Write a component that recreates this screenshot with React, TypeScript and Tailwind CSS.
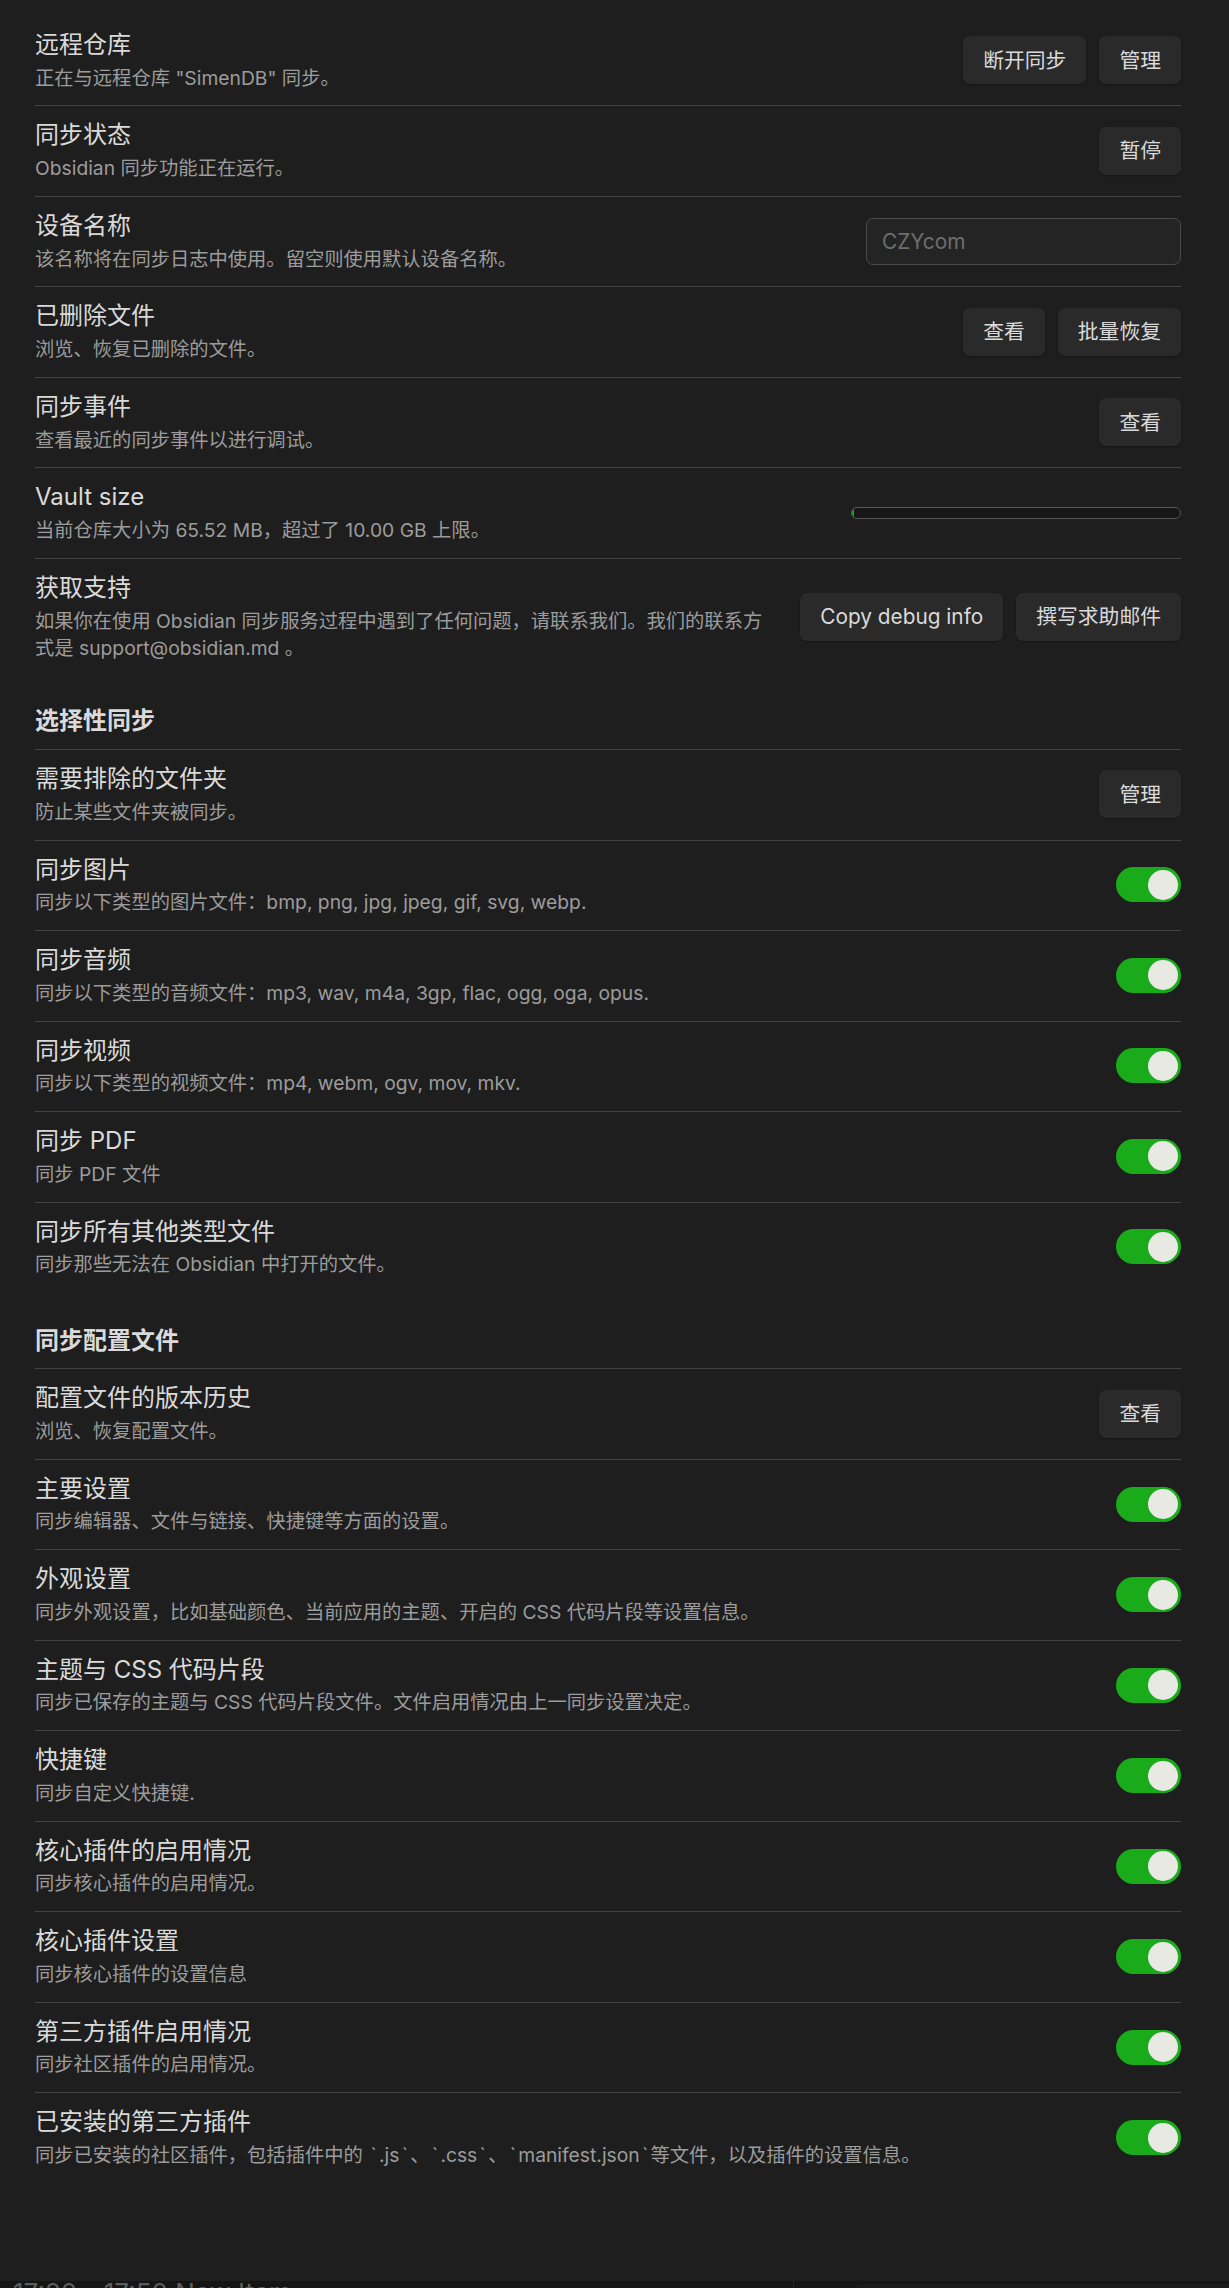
import React from 'react';
import clsx from 'clsx';

type Control =
  | { kind: 'buttons'; labels: string[] }
  | { kind: 'toggle' }
  | { kind: 'input'; placeholder: string }
  | { kind: 'progress'; percent: number };

interface Item {
  name: string;
  desc: React.ReactNode;
  control: Control;
}

interface Section {
  heading?: string;
  headingPad?: string;
  items: Item[];
}

// backtick in the reference font is noticeably wider
const Tick = () => <span className="px-[2.3px]">`</span>;

const sections: Section[] = [
  {
    items: [
      {
        name: '远程仓库',
        desc: '正在与远程仓库 "SimenDB" 同步。',
        control: { kind: 'buttons', labels: ['断开同步', '管理'] },
      },
      {
        name: '同步状态',
        desc: 'Obsidian 同步功能正在运行。',
        control: { kind: 'buttons', labels: ['暂停'] },
      },
      {
        name: '设备名称',
        desc: '该名称将在同步日志中使用。留空则使用默认设备名称。',
        control: { kind: 'input', placeholder: 'CZYcom' },
      },
      {
        name: '已删除文件',
        desc: '浏览、恢复已删除的文件。',
        control: { kind: 'buttons', labels: ['查看', '批量恢复'] },
      },
      {
        name: '同步事件',
        desc: '查看最近的同步事件以进行调试。',
        control: { kind: 'buttons', labels: ['查看'] },
      },
      {
        name: 'Vault size',
        desc: '当前仓库大小为 65.52 MB，超过了 10.00 GB 上限。',
        control: { kind: 'progress', percent: 0.7 },
      },
      {
        name: '获取支持',
        desc: (
          <>
            如果你在使用 Obsidian 同步服务过程中遇到了任何问题，请联系我们。我们的联系方
            <br />
            式是 support@obsidian.md 。
          </>
        ),
        control: { kind: 'buttons', labels: ['Copy debug info', '撰写求助邮件'] },
      },
    ],
  },
  {
    heading: '选择性同步',
    headingPad: 'pt-[30px] pb-[12.5px]',
    items: [
      {
        name: '需要排除的文件夹',
        desc: '防止某些文件夹被同步。',
        control: { kind: 'buttons', labels: ['管理'] },
      },
      {
        name: '同步图片',
        desc: '同步以下类型的图片文件：bmp, png, jpg, jpeg, gif, svg, webp.',
        control: { kind: 'toggle' },
      },
      {
        name: '同步音频',
        desc: '同步以下类型的音频文件：mp3, wav, m4a, 3gp, flac, ogg, oga, opus.',
        control: { kind: 'toggle' },
      },
      {
        name: '同步视频',
        desc: '同步以下类型的视频文件：mp4, webm, ogv, mov, mkv.',
        control: { kind: 'toggle' },
      },
      { name: '同步 PDF', desc: '同步 PDF 文件', control: { kind: 'toggle' } },
      {
        name: '同步所有其他类型文件',
        desc: '同步那些无法在 Obsidian 中打开的文件。',
        control: { kind: 'toggle' },
      },
    ],
  },
  {
    heading: '同步配置文件',
    headingPad: 'pt-[32.5px] pb-[12.5px]',
    items: [
      {
        name: '配置文件的版本历史',
        desc: '浏览、恢复配置文件。',
        control: { kind: 'buttons', labels: ['查看'] },
      },
      {
        name: '主要设置',
        desc: '同步编辑器、文件与链接、快捷键等方面的设置。',
        control: { kind: 'toggle' },
      },
      {
        name: '外观设置',
        desc: '同步外观设置，比如基础颜色、当前应用的主题、开启的 CSS 代码片段等设置信息。',
        control: { kind: 'toggle' },
      },
      {
        name: '主题与 CSS 代码片段',
        desc: '同步已保存的主题与 CSS 代码片段文件。文件启用情况由上一同步设置决定。',
        control: { kind: 'toggle' },
      },
      { name: '快捷键', desc: '同步自定义快捷键.', control: { kind: 'toggle' } },
      {
        name: '核心插件的启用情况',
        desc: '同步核心插件的启用情况。',
        control: { kind: 'toggle' },
      },
      {
        name: '核心插件设置',
        desc: '同步核心插件的设置信息',
        control: { kind: 'toggle' },
      },
      {
        name: '第三方插件启用情况',
        desc: '同步社区插件的启用情况。',
        control: { kind: 'toggle' },
      },
      {
        name: '已安装的第三方插件',
        desc: (
          <>
            同步已安装的社区插件，包括插件中的 <Tick />.js<Tick />、<Tick />.css<Tick />、<Tick />
            manifest.json<Tick />等文件，以及插件的设置信息。
          </>
        ),
        control: { kind: 'toggle' },
      },
    ],
  },
];

const Toggle = () => (
  <div className="relative h-[35px] w-[65px] rounded-full bg-[#1aab1b]">
    <div className="absolute right-[3px] top-[2.5px] h-[30px] w-[30px] rounded-full bg-[#e9e9e4]" />
  </div>
);

const ControlView = ({ control }: { control: Control }) => {
  if (control.kind === 'toggle') return <Toggle />;
  if (control.kind === 'input') {
    return (
      <input
        readOnly
        placeholder={control.placeholder}
        className="h-[47px] w-[315px] rounded-[7px] border border-[#4a4a4a] bg-[#242424] px-[15px] text-[20.8px] text-[#dadada] outline-none placeholder:text-[#6e6e6e]"
      />
    );
  }
  if (control.kind === 'progress') {
    return (
      <div className="h-[12px] w-[330px] overflow-hidden rounded-full border-[1.5px] border-[#555555] bg-[#161616]">
        <div className="h-full bg-[#1aab1b]" style={{ width: `${control.percent}%` }} />
      </div>
    );
  }
  return (
    <>
      {control.labels.map((label) => (
        <button
          key={label}
          className="h-[48px] rounded-[7px] bg-[#2a2a2a] px-[20px] text-[20.8px] text-[#dadada] shadow-[0_1px_2px_rgba(0,0,0,0.3)]"
        >
          {label}
        </button>
      ))}
    </>
  );
};

const SettingRow = ({ item, bordered }: { item: Item; bordered: boolean }) => (
  <div
    className={clsx(
      'flex items-center pb-[13.8px] pt-[13px]',
      bordered && 'border-t border-[#414141]'
    )}
  >
    <div className="min-w-0 flex-1 pr-[24px]">
      <div className="text-[24px] leading-[31.2px] text-[#dadada]">{item.name}</div>
      <div className="whitespace-nowrap pt-[4.5px] text-[19.3px] leading-[27px] text-[#9c9c9c]">
        {item.desc}
      </div>
    </div>
    <div className="flex shrink-0 items-center gap-[13px]">
      <ControlView control={item.control} />
    </div>
  </div>
);

export default function App() {
  return (
    <div
      className="flex h-[2288px] flex-col overflow-hidden bg-[#1e1e1e]"
      style={{ fontFamily: 'Inter, "Noto Sans CJK SC", sans-serif' }}
    >
      <div className="h-[2281px] shrink-0 pl-[35px] pr-[48px] pt-[15.8px]">
        {sections.map((section, si) => (
          <div key={si}>
            {section.heading && (
              <div
                className={clsx(
                  'text-[24px] font-semibold leading-[31.2px] text-[#dadada]',
                  section.headingPad
                )}
              >
                {section.heading}
              </div>
            )}
            {section.items.map((item, i) => (
              <SettingRow
                key={item.name}
                item={item}
                bordered={!(si === 0 && i === 0)}
              />
            ))}
          </div>
        ))}
      </div>
      <div className="flex h-[40px] shrink-0 bg-[#151515]">
        <div className="-mt-[1.5px] w-[793px] pl-[13px] text-[26px] leading-none text-[#5e5e5e]">
          17:20 - 17:50 New Item
        </div>
        <div className="flex-1 border-l border-[#262626] pl-[60px] pt-[3px]">
          <div className="h-full rounded-tl-[8px] bg-[#1c1c1c]" />
        </div>
      </div>
    </div>
  );
}
